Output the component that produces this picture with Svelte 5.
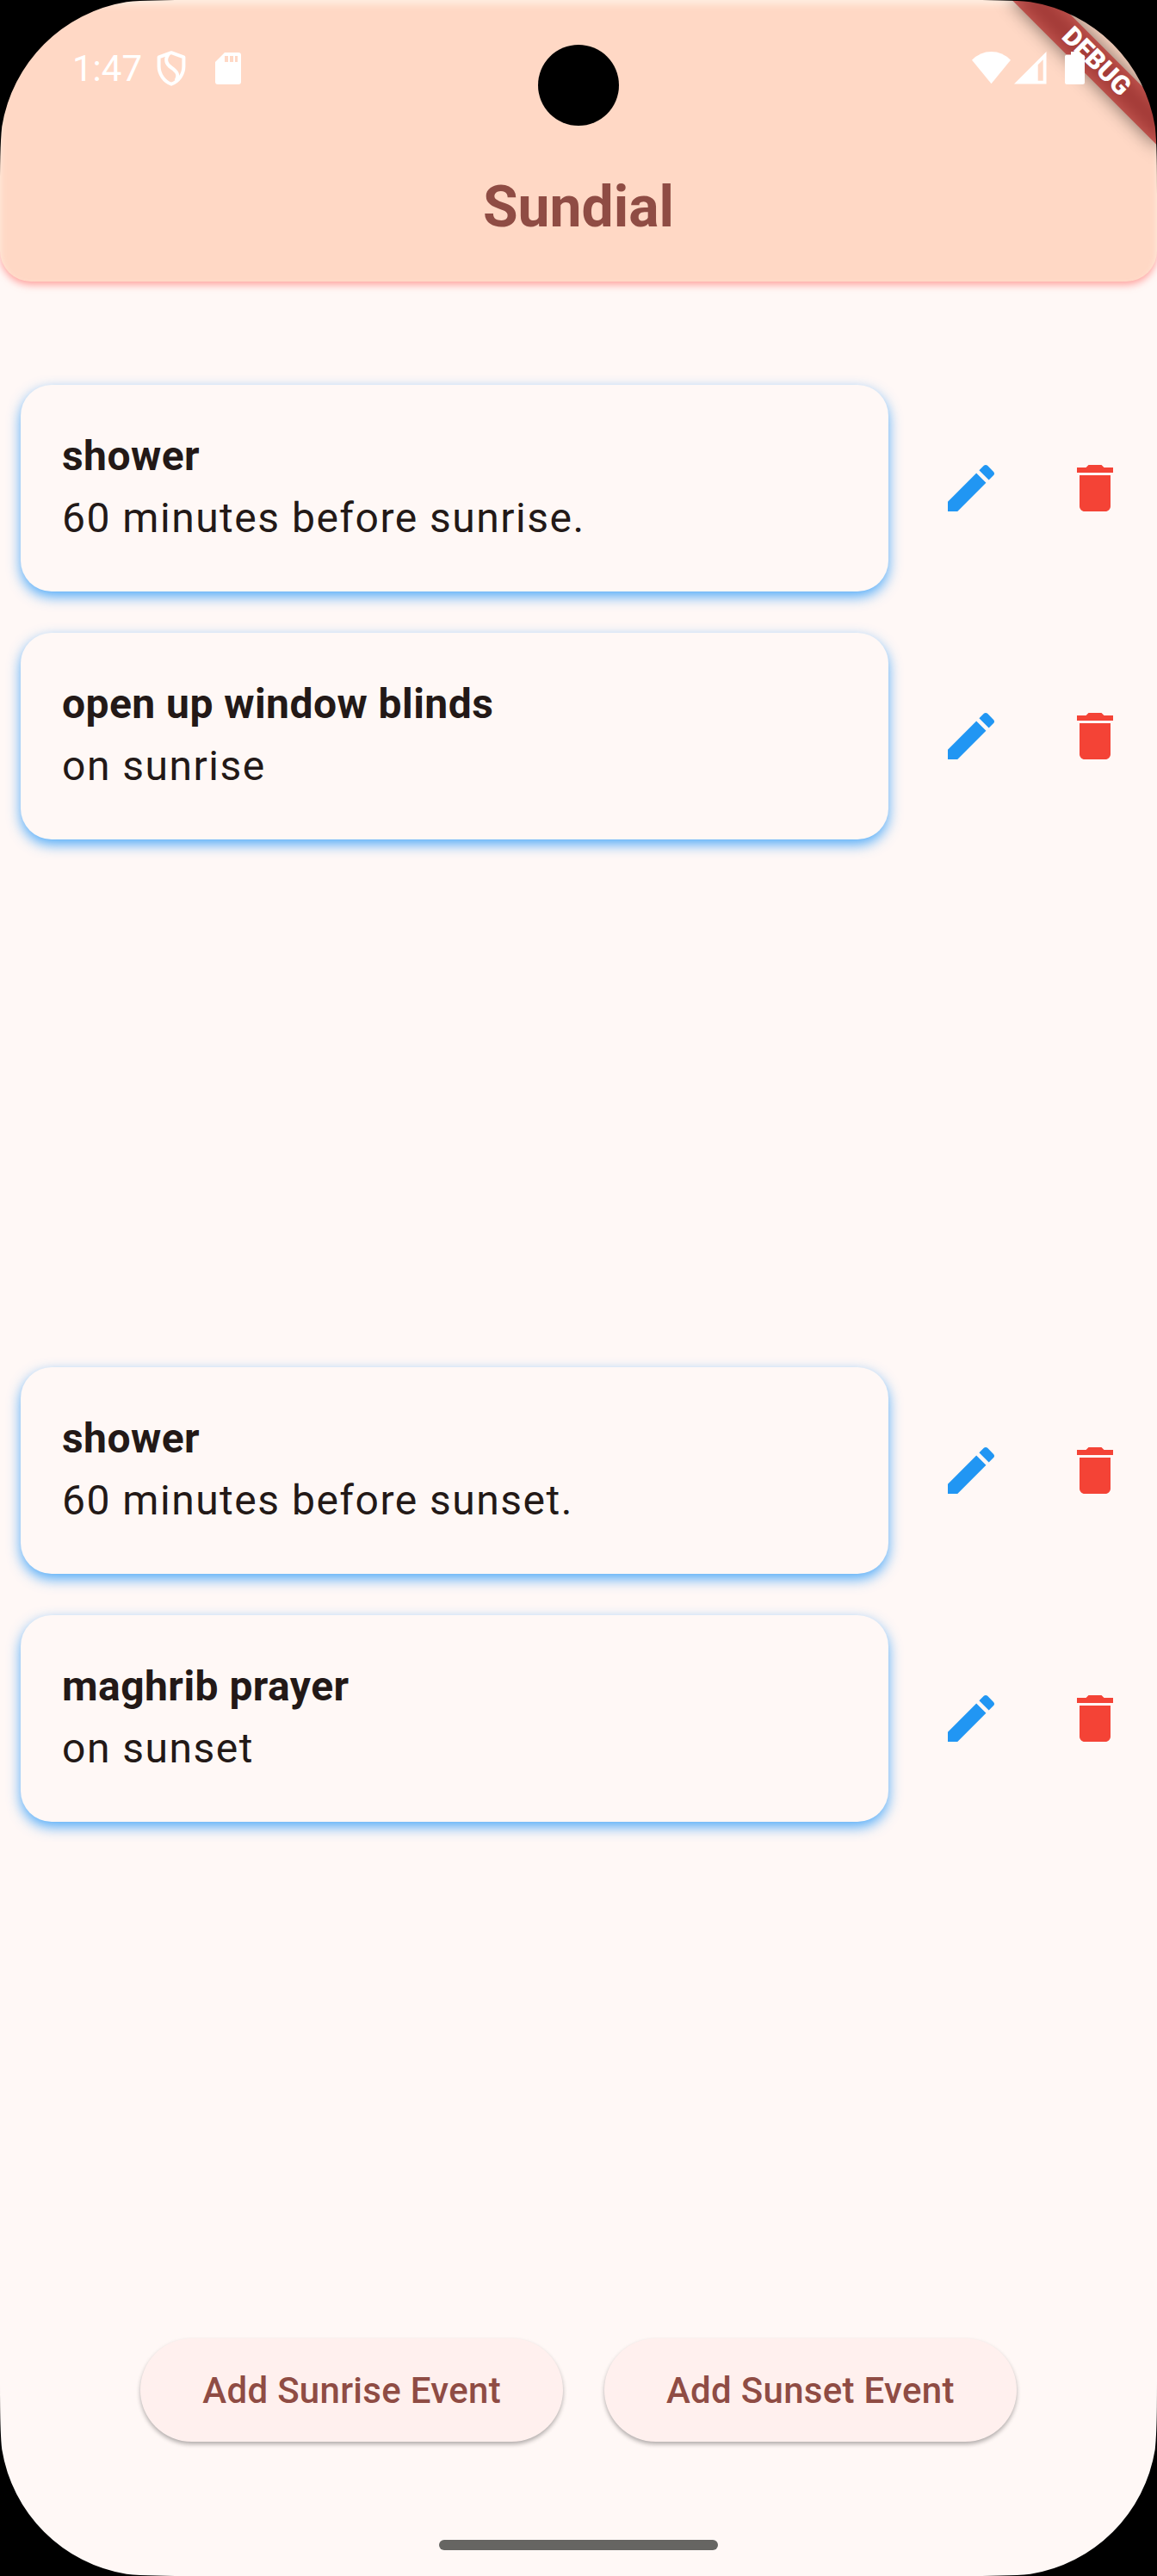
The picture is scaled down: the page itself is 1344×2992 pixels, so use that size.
<script>
  const sections = [
    [
      { name: 'shower', when: '60 minutes before sunrise.' },
      { name: 'open up window blinds', when: 'on sunrise' },
    ],
    [
      { name: 'shower', when: '60 minutes before sunset.' },
      { name: 'maghrib prayer', when: 'on sunset' },
    ],
  ];

  // One display corner; mirrored for the other three.
  const corner = 'M0 0V226C0 195 .3 165 2.25 147A175 175 0 0 1 147 2.25C165 .3 195 0 226 0Z';
</script>

<div class="screen">
  <header class="appbar">
    <div class="status">
      <span class="time">1:47</span>
      <svg class="shield" width="34" height="42" viewBox="0 0 34 42" fill="none" stroke="#fff" stroke-width="4">
        <path d="M17 2.2 2.6 7.4V18C2.6 27 8.500 35.500 17 38.700 25.500 35.500 31.400 27 31.400 18V7.400Z" stroke-linejoin="round" />
        <path d="M14 3.500C9 10 11 15.500 17 19.500 23.500 24 26.500 28 22.500 34.500" />
      </svg>
      <svg class="sd" width="30" height="37" viewBox="0 0 30 37" fill="#fff">
        <path fill-rule="evenodd" d="M11 0H27Q30 0 30 3V34Q30 37 27 37H3Q0 37 0 34V11ZM11 4V11H15V4ZM17 4V11H21V4ZM23 4V11H26V4Z" />
      </svg>
      <span class="spacer"></span>
      <svg class="wifi" width="45" height="38" viewBox="0 0 45 38" fill="#fff">
        <path d="M0 9.800Q9.500 0 22.500 0T45 9.800L22.500 37.300Z" />
      </svg>
      <svg class="signal" width="38" height="38" viewBox="0 0 38 38" fill="#fff">
        <path fill-rule="evenodd" d="M0 37.500 37.500 0V37.500ZM27.700 15.200V33.700H33.700V9.200Z" />
      </svg>
      <svg class="battery" width="23" height="38" viewBox="0 0 23 38" fill="#fff">
        <path d="M7 0H16V3.500H20.500Q23 3.500 23 6V35.500Q23 38 20.500 38H2.500Q0 38 0 35.500V6Q0 3.500 2.500 3.500H7Z" />
      </svg>
    </div>
    <h1>Sundial</h1>
    <div class="ribbon-shade"></div>
    <div class="ribbon">DEBUG</div>
  </header>

  <main>
    {#each sections as events}
      <section>
        {#each events as event}
          <div class="row">
            <article class="card">
              <strong>{event.name}</strong>
              <span>{event.when}</span>
            </article>
            <button class="icon edit" aria-label="Edit">
              <svg viewBox="0 0 24 24"><path d="M3 17.250V21h3.750L17.810 9.940l-3.750-3.750L3 17.250zM20.710 7.040c.39-.39.39-1.020 0-1.410l-2.340-2.340c-.39-.39-1.020-.39-1.410 0l-1.830 1.830 3.750 3.750 1.830-1.830z" /></svg>
            </button>
            <button class="icon delete" aria-label="Delete">
              <svg viewBox="0 0 24 24"><path d="M6 19c0 1.100.9 2 2 2h8c1.100 0 2-.9 2-2V7H6v12zM19 4h-3.500l-1-1h-5l-1 1H5v2h14V4z" /></svg>
            </button>
          </div>
        {/each}
      </section>
    {/each}
  </main>

  <footer>
    <button class="add">Add Sunrise Event</button>
    <button class="add">Add Sunset Event</button>
  </footer>
  <div class="home"></div>

  <div class="camera"></div>
  {#each ['tl', 'tr', 'bl', 'br'] as place}
    <svg class="corner {place}" width="226" height="226" viewBox="0 0 226 226"><path d={corner} /></svg>
  {/each}
</div>

<style>
  :global(body) {
    background: #fff8f6;
  }
  .screen {
    position: relative;
    width: 1344px;
    height: 2992px;
    overflow: hidden;
    display: flex;
    flex-direction: column;
    align-items: center;
    background: #fff8f6;
    color: #231917;
    font-family: Roboto, sans-serif;
  }
  .appbar {
    position: relative;
    flex: none;
    width: 100%;
    height: 327px;
    border-radius: 0 0 36px 36px;
    background: #ffd8c5;
    box-shadow:
      inset 0 5px 9px rgba(255, 241, 228, 0.9),
      0 4px 8px rgba(255, 110, 105, 0.6);
  }
  .status {
    position: relative;
    z-index: 2;
    display: flex;
    align-items: flex-start;
    height: 156px;
    padding: 0 84px;
    box-sizing: border-box;
    color: #fff;
  }
  .time {
    width: 98px;
    padding-top: 55px;
    font-size: 42px;
    line-height: 49px;
  }
  .status svg {
    flex: none;
    margin-top: 60px;
  }
  .status .shield {
    margin-top: 59px;
  }
  .status .sd {
    margin: 61px 0 0 34px;
  }
  .spacer {
    flex: 1;
  }
  .status .signal {
    margin-left: 4px;
  }
  .status .battery {
    margin-left: 21px;
  }
  h1 {
    margin: 43px 0 0;
    text-align: center;
    color: #8f4c44;
    font-size: 66px;
    font-weight: 700;
    line-height: 84px;
  }
  .ribbon,
  .ribbon-shade {
    position: absolute;
    left: 1152.5px;
    top: 53.5px;
    width: 240px;
    height: 36px;
    transform: rotate(45deg);
  }
  .ribbon-shade {
    background: rgba(0, 0, 0, 0.5);
    filter: blur(10.9px);
  }
  .ribbon {
    background: rgba(183, 28, 28, 0.627);
    color: #fff;
    text-align: center;
    font-size: 30.6px;
    font-weight: 900;
    line-height: 34px;
  }
  main {
    width: 100%;
    box-sizing: border-box;
    padding-top: 96px;
    flex: none;
  }
  section {
    height: 1141px;
  }
  .row {
    display: flex;
    align-items: center;
    padding: 24px 0;
  }
  .card {
    display: flex;
    flex-direction: column;
    width: 1008px;
    height: 240px;
    margin: 0 24px;
    padding: 47px 48px 49px;
    box-sizing: border-box;
    border-radius: 36px;
    background: #fff8f6;
    box-shadow: 0 6px 15px rgba(33, 150, 250, 0.78);
    font-size: 48px;
    line-height: 72px;
    letter-spacing: 1.5px;
  }
  strong {
    letter-spacing: 0.45px;
  }
  button {
    border: 0;
    padding: 0;
    font: inherit;
  }
  .icon {
    width: 144px;
    height: 144px;
    background: none;
    display: grid;
    place-items: center;
  }
  .icon svg {
    width: 72px;
    height: 72px;
    fill: currentColor;
  }
  .edit {
    color: #2196f3;
  }
  .delete {
    color: #f44336;
  }
  footer {
    display: flex;
    gap: 48px;
    margin-top: 11px;
  }
  .add {
    height: 120px;
    padding: 0 72px;
    border-radius: 60px;
    background: #fff0ee;
    color: #8f4c44;
    font-size: 42px;
    font-weight: 500;
    letter-spacing: 0.3px;
    box-shadow: 0 3px 5px rgba(0, 0, 0, 0.3);
  }
  .home {
    width: 324px;
    height: 12px;
    margin-top: 114px;
    border-radius: 6px;
    background: #666562;
  }
  .camera {
    position: absolute;
    left: 625px;
    top: 52px;
    width: 94px;
    height: 94px;
    border-radius: 50%;
    background: #000;
  }
  .corner {
    position: absolute;
    z-index: 3;
    fill: #000;
  }
  .tl,
  .tr {
    top: 0;
  }
  .bl,
  .br {
    bottom: 0;
  }
  .tl,
  .bl {
    left: 0;
  }
  .tr,
  .br {
    right: 0;
  }
  .tr {
    transform: scaleX(-1);
  }
  .bl {
    transform: scaleY(-1);
  }
  .br {
    transform: scale(-1);
  }
</style>
